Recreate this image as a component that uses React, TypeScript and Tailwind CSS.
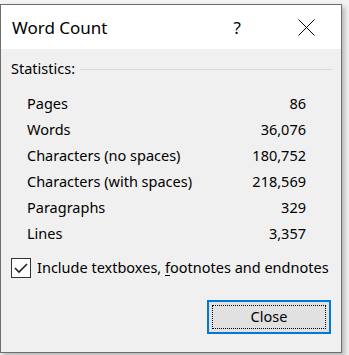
const stats: [string, string][] = [
  ['Pages', '86'],
  ['Words', '36,076'],
  ['Characters (no spaces)', '180,752'],
  ['Characters (with spaces)', '218,569'],
  ['Paragraphs', '329'],
  ['Lines', '3,357'],
];

export default function App() {
  return (
    <div className="w-[349px] h-[355px] bg-[#f3f3f3] pt-[4px] font-['Noto_Sans',sans-serif] text-black">
      <div className="w-[342px] h-[349px] border border-[#6e6e6e] flex flex-col shadow-[3px_3px_5px_rgba(0,0,0,0.25)]">
        {/* title bar */}
        <div className="h-[44px] bg-white flex items-center pl-[11px] shrink-0">
          <span className="text-[17px] leading-none">Word Count</span>
          <span className="ml-auto text-[17px] leading-none mr-[57px]">?</span>
          <svg width="17" height="17" viewBox="0 0 17 17" className="mr-[26px]">
            <path d="M0.5 0.5 L16.5 16.5 M16.5 0.5 L0.5 16.5" stroke="#000" strokeWidth="1" />
          </svg>
        </div>

        <div className="flex-1 bg-[#f0f0f0] flex flex-col pt-[10px] text-[14.5px]">
          <div className="h-[20px] flex items-center pl-[10px] pr-[9px]">
            <span>Statistics:</span>
            <div className="flex-1 h-px bg-[#d9d9d9] ml-[5px]" />
          </div>

          <div className="mt-[12px] pl-[26px] pr-[35px]">
            {stats.map(([k, v]) => (
              <div key={k} className="h-[26px] flex items-center justify-between">
                <span>{k}</span>
                <span>{v}</span>
              </div>
            ))}
          </div>

          <label className="mt-[11px] h-[20px] flex items-center pl-[10px]">
            <span className="w-[20px] h-[20px] border border-[#333] bg-white flex items-center justify-center">
              <svg width="14" height="12" viewBox="0 0 14 12">
                <path d="M1 6 L5 10 L13 2" fill="none" stroke="#222" strokeWidth="1.6" />
              </svg>
            </span>
            <span className="ml-[6px]">
              Include textboxes, <span className="underline underline-offset-2">f</span>ootnotes and endnotes
            </span>
          </label>

          <div className="mt-[22px] flex justify-end pr-[10px]">
            <button className="w-[124px] h-[34px] border-2 border-[#0078d7] bg-[#e1e1e1] p-[3px]">
              <span className="w-full h-full border border-dotted border-black flex items-center justify-center">
                Close
              </span>
            </button>
          </div>
        </div>
      </div>
    </div>
  );
}
